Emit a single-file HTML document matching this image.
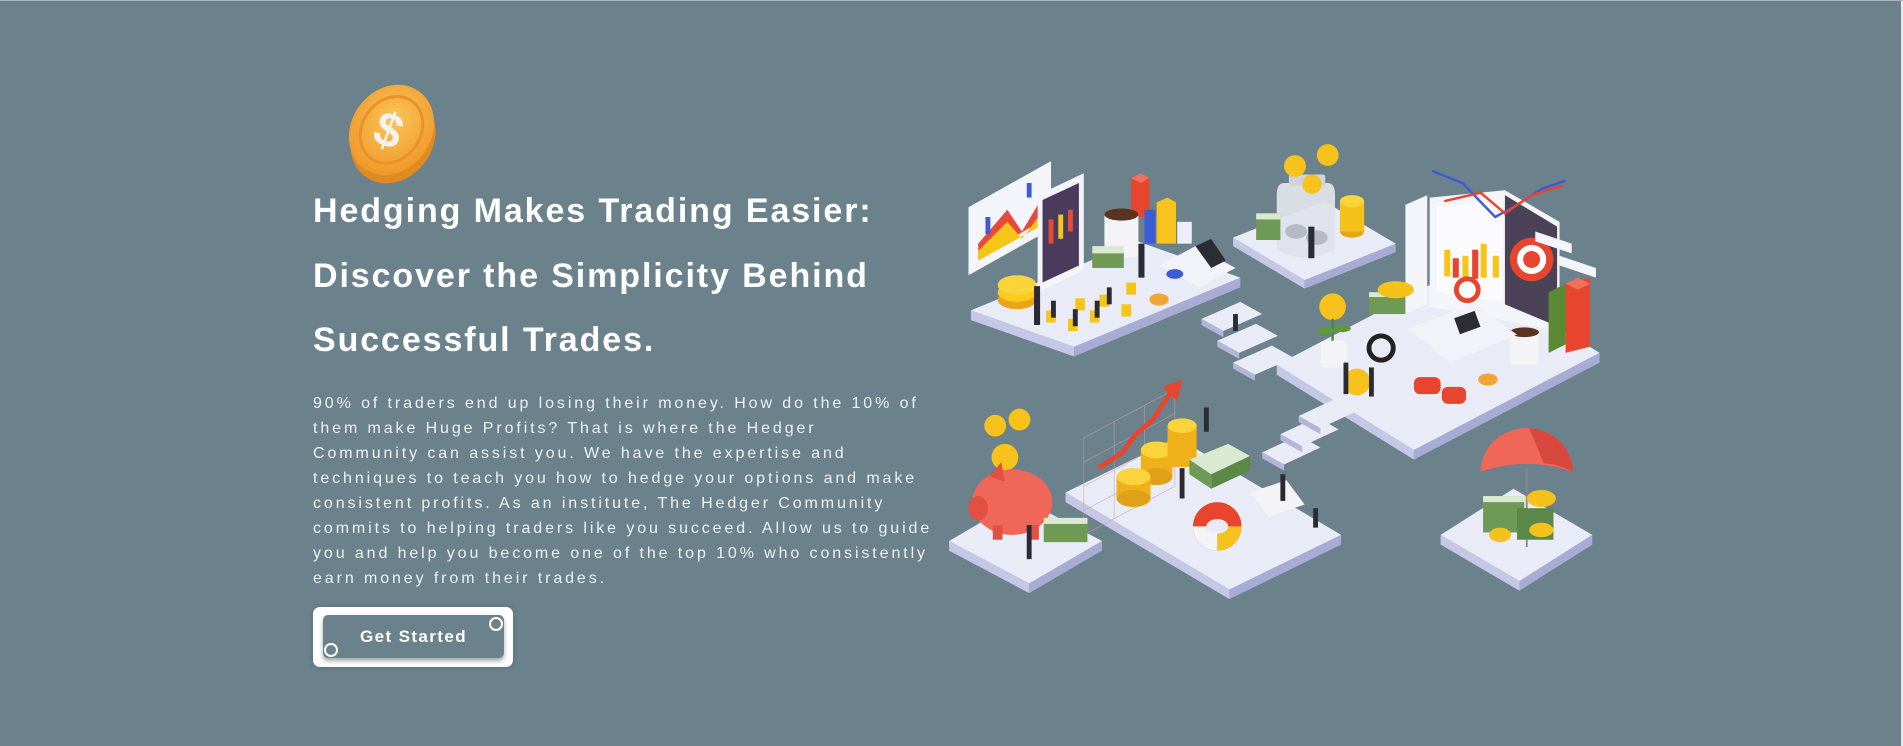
<!DOCTYPE html>
<html><head><meta charset="utf-8"><style>
html,body{margin:0;padding:0}
body{width:1903px;height:745px;background:#6b818b;position:relative;overflow:hidden;font-family:"Liberation Sans",sans-serif;border-top:1px solid #aab4bc;box-sizing:border-box}
.edge{position:absolute;right:0;top:0;width:2px;height:745px;background:#e8ecef}
h1{position:absolute;left:313px;top:178px;margin:0;color:#fff;font-size:34px;font-weight:bold;line-height:64.5px;letter-spacing:1.9px;width:700px;white-space:nowrap}
p{position:absolute;left:313px;top:390px;margin:0;color:#eef1f3;font-size:16px;line-height:25px;letter-spacing:2.9px;width:700px;white-space:nowrap}
.btn-o{position:absolute;left:313px;top:606px;width:200px;height:60px;background:#fff;border-radius:7px;box-shadow:0 0 6px rgba(0,0,0,.15)}
.btn-i{position:absolute;left:10px;top:8px;width:181px;height:43px;background:#6b818b;border-radius:5px;box-shadow:0 3px 5px rgba(0,0,0,.35);color:#fff;font-weight:bold;font-size:17px;letter-spacing:1.4px;text-align:center;line-height:43px}
.c{position:absolute;width:10px;height:10px;border:2px solid #fff;border-radius:50%;background:#6b818b}
svg.ill{position:absolute;left:0;top:0}
</style></head><body>
<div class="edge"></div>
<svg class="ill" width="1903" height="745" viewBox="0 0 1568 614" preserveAspectRatio="none">
<defs>
<radialGradient id="cg" cx="45%" cy="40%" r="60%"><stop offset="0" stop-color="#fbc45a"/><stop offset="1" stop-color="#ef9a2a"/></radialGradient>
</defs>
<g transform="rotate(35 322 107)">
<ellipse cx="327" cy="111" rx="33" ry="39" fill="#e08a22"/>
<ellipse cx="322" cy="106" rx="33" ry="39" fill="url(#cg)"/>
<ellipse cx="322" cy="106" rx="24" ry="29" fill="none" stroke="#e8922a" stroke-width="2.5"/>
</g>
<text x="320" y="120" font-family="Liberation Sans" font-weight="bold" font-size="40" fill="#f6f1ea" text-anchor="middle" transform="rotate(20 320 107)">$</text>

<g stroke="none">
<polygon points="800,255 885,285 885,293 800,263" fill="#c4c7e6"/><polygon points="885,285 1022,228 1022,236 885,293" fill="#a8abd4"/><polygon points="800,255 937,198 1022,228 885,285" fill="#e9ebf7"/>
<polygon points="1016,195 1075,230 1075,237 1016,202" fill="#c4c7e6"/><polygon points="1075,230 1150,200 1150,207 1075,237" fill="#a8abd4"/><polygon points="1016,195 1091,165 1150,200 1075,230" fill="#e9ebf7"/>
<polygon points="1052,300 1165,370 1165,378 1052,308" fill="#c4c7e6"/><polygon points="1165,370 1318,290 1318,298 1165,378" fill="#a8abd4"/><polygon points="1052,300 1205,220 1318,290 1165,370" fill="#e9ebf7"/>
<polygon points="878,405 1013,485 1013,493 878,413" fill="#c4c7e6"/><polygon points="1013,485 1105,440 1105,448 1013,493" fill="#a8abd4"/><polygon points="878,405 970,360 1105,440 1013,485" fill="#e9ebf7"/>
<polygon points="782,445 848,480 848,488 782,453" fill="#c4c7e6"/><polygon points="848,480 908,445 908,453 848,488" fill="#a8abd4"/><polygon points="782,445 842,410 908,445 848,480" fill="#e9ebf7"/>
<polygon points="1187,440 1252,478 1252,486 1187,448" fill="#c4c7e6"/><polygon points="1252,478 1312,440 1312,448 1252,486" fill="#a8abd4"/><polygon points="1187,440 1247,402 1312,440 1252,478" fill="#e9ebf7"/>
<g fill="#e9ebf7">
<polygon points="990,262 1022,248 1040,258 1008,272"/><polygon points="1003,280 1035,266 1053,276 1021,290"/><polygon points="1016,298 1048,284 1066,294 1034,308"/>
<polygon points="1040,372 1070,358 1088,368 1058,382"/><polygon points="1055,357 1085,343 1103,353 1073,367"/><polygon points="1070,342 1100,328 1118,338 1088,352"/>
</g>
<g fill="#b3b6da">
<polygon points="990,262 1008,272 1008,277 990,267"/><polygon points="1003,280 1021,290 1021,295 1003,285"/><polygon points="1016,298 1034,308 1034,313 1016,303"/>
<polygon points="1040,372 1058,382 1058,387 1040,377"/><polygon points="1055,357 1073,367 1073,372 1055,362"/><polygon points="1070,342 1088,352 1088,357 1070,347"/>
</g>
</g>

<polygon points="798,170 866,132 866,188 798,226" fill="#f4f5fb"/>
<polygon points="806,200 830,172 842,190 860,160 860,180 806,212" fill="#e84a3a"/>
<polygon points="806,206 830,182 842,196 860,172 860,184 806,214" fill="#f5c518"/>
<rect x="812" y="178" width="4" height="14" fill="#3d5bd6"/><rect x="846" y="150" width="4" height="12" fill="#3d5bd6"/>
<polygon points="855,160 893,142 893,222 855,240" fill="#f4f5fb"/>
<polygon points="859,164 889,150 889,218 859,232" fill="#4a3b5c"/>
<rect x="864" y="180" width="4" height="20" fill="#e84a3a"/><rect x="872" y="176" width="4" height="20" fill="#f5c518"/><rect x="880" y="172" width="4" height="18" fill="#e84a3a"/>
<polygon points="932,146 940,142 947,146 947,178 932,178" fill="#e8452f"/>
<polygon points="932,146 940,142 947,146 940,150" fill="#f0705e"/>
<polygon points="953,166 962,162 969,166 969,200 953,200" fill="#f7c31c"/>
<rect x="943" y="172" width="9" height="28" fill="#3d5bd6"/>
<rect x="910" y="175" width="28" height="36" rx="3" fill="#f4f4f6"/><ellipse cx="924" cy="176" rx="14" ry="5" fill="#5a3421"/>
<rect x="970" y="182" width="12" height="18" fill="#eceef8"/>
<polygon points="955,218 985,202 1018,220 988,236" fill="#f2f3f8"/><polygon points="985,202 998,196 1010,214 998,220" fill="#2c2c34"/>
<ellipse cx="838" cy="246" rx="16" ry="8" fill="#e8a51a"/><ellipse cx="838" cy="240" rx="16" ry="8" fill="#f8cb1c"/><ellipse cx="838" cy="234" rx="16" ry="8" fill="#fad43a"/>
<rect x="900" y="206" width="26" height="14" fill="#6e9a55"/><rect x="900" y="202" width="26" height="6" fill="#d9ead0"/>
<g fill="#f5c518"><rect x="862" y="255" width="8" height="10"/><rect x="880" y="262" width="8" height="10"/><rect x="898" y="255" width="8" height="10"/><rect x="886" y="245" width="8" height="10"/><rect x="906" y="242" width="8" height="10"/><rect x="924" y="250" width="8" height="10"/><rect x="928" y="232" width="8" height="10"/></g>
<g fill="#2b2b33"><rect x="852" y="235" width="5" height="32"/><rect x="866" y="247" width="4" height="14"/><rect x="884" y="254" width="4" height="14"/><rect x="902" y="247" width="4" height="14"/><rect x="912" y="236" width="4" height="14"/><rect x="938" y="200" width="5" height="28"/></g>
<ellipse cx="955" cy="246" rx="8" ry="5" fill="#f0a535"/><ellipse cx="968" cy="225" rx="7" ry="4" fill="#3d5bd6"/>

<path d="M1058,150 Q1052,150 1052,160 L1052,205 Q1075,218 1100,205 L1100,160 Q1100,150 1094,150 Z" fill="#dfe3ea" opacity="0.95"/>
<rect x="1062" y="143" width="30" height="9" rx="2" fill="#cfd4dc"/>
<ellipse cx="1068" cy="190" rx="9" ry="6" fill="#b5bac3"/><ellipse cx="1085" cy="195" rx="9" ry="6" fill="#b5bac3"/>
<circle cx="1067" cy="136" r="9" fill="#f7c21c"/><circle cx="1094" cy="127" r="9" fill="#f7c21c"/><circle cx="1081" cy="151" r="8" fill="#f7c21c"/>
<ellipse cx="1114" cy="190" rx="10" ry="5" fill="#e8a51a"/><rect x="1104" y="165" width="20" height="25" fill="#f5c21c"/><ellipse cx="1114" cy="165" rx="10" ry="5" fill="#fad43a"/>
<rect x="1035" y="175" width="20" height="22" fill="#6e9a55"/><rect x="1035" y="175" width="20" height="5" fill="#d9ead0"/>
<rect x="1078" y="186" width="5" height="26" fill="#2b2b33"/>

<polygon points="1158,168 1176,160 1176,250 1158,258" fill="#f4f5fb"/>
<polygon points="1178,162 1240,156 1285,182 1285,272 1178,252" fill="#f4f5fb"/>
<polygon points="1184,170 1238,164 1238,248 1184,240" fill="#fbfbfd"/>
<polygon points="1240,160 1283,186 1283,268 1240,250" fill="#4b4257"/>
<g fill="#f5c518"><rect x="1190" y="205" width="5" height="22"/><rect x="1205" y="210" width="5" height="20"/><rect x="1220" y="200" width="5" height="28"/><rect x="1230" y="210" width="5" height="18"/></g>
<g fill="#e8452f"><rect x="1197" y="212" width="5" height="16"/><rect x="1213" y="205" width="5" height="24"/></g>
<circle cx="1209" cy="238" r="9" fill="none" stroke="#e8452f" stroke-width="4"/>
<circle cx="1262" cy="213" r="18" fill="#e8452f"/><circle cx="1262" cy="213" r="12" fill="#fff"/><circle cx="1262" cy="213" r="7" fill="#e8452f"/>
<polyline points="1180,140 1205,150 1232,178 1250,168 1270,155 1290,148" fill="none" stroke="#3d5bd6" stroke-width="2"/>
<polyline points="1190,165 1220,158 1240,175 1262,160 1288,152" fill="none" stroke="#e8452f" stroke-width="2"/>
<polygon points="1265,190 1295,200 1295,208 1265,198" fill="#f4f5fb"/><polygon points="1285,210 1315,220 1315,228 1285,218" fill="#f4f5fb"/>
<polygon points="1276,240 1290,233 1290,283 1276,290" fill="#5a8a33"/>
<polygon points="1290,233 1310,228 1310,285 1290,290" fill="#e8452f"/><polygon points="1290,233 1300,228 1310,233 1300,238" fill="#f0705e"/>
<rect x="1244" y="272" width="24" height="28" rx="3" fill="#f4f4f6"/><ellipse cx="1256" cy="273" rx="12" ry="4" fill="#5a3421"/>
<polygon points="1160,270 1215,250 1250,275 1195,298" fill="#f2f3f8"/>
<rect x="1200" y="258" width="18" height="14" fill="#2c2c34" transform="rotate(-20 1209 265)"/>
<circle cx="1098" cy="252" r="11" fill="#f7c21c"/><path d="M1098,262 L1098,280" stroke="#4f8a30" stroke-width="2"/>
<ellipse cx="1092" cy="272" rx="7" ry="3" fill="#5f9a3a"/><ellipse cx="1106" cy="270" rx="7" ry="3" fill="#5f9a3a"/>
<rect x="1088" y="280" width="22" height="22" rx="3" fill="#f4f4f6"/>
<circle cx="1138" cy="286" r="10" fill="none" stroke="#222" stroke-width="4"/>
<rect x="1128" y="240" width="30" height="18" fill="#6e9a55"/><rect x="1128" y="240" width="30" height="4" fill="#d9ead0"/>
<ellipse cx="1150" cy="238" rx="15" ry="7" fill="#f5c21c"/>
<ellipse cx="1118" cy="314" rx="11" ry="11" fill="#f7c21c"/>
<rect x="1165" y="310" width="22" height="14" rx="5" fill="#e8452f"/><rect x="1188" y="318" width="20" height="14" rx="5" fill="#e8452f"/>
<g fill="#2b2b33"><rect x="1107" y="298" width="4" height="26"/><rect x="1128" y="302" width="4" height="24"/><rect x="1016" y="258" width="4" height="14"/></g>
<ellipse cx="1226" cy="312" rx="8" ry="5" fill="#f0a535"/>

<g stroke="#c7a1a8" stroke-width="0.6" fill="none" opacity="0.7">
<polygon points="893,360 968,320 968,400 893,440"/>
<line x1="918" y1="347" x2="918" y2="427"/><line x1="943" y1="333" x2="943" y2="413"/>
<line x1="893" y1="380" x2="968" y2="340"/><line x1="893" y1="400" x2="968" y2="360"/><line x1="893" y1="420" x2="968" y2="380"/>
</g>
<polyline points="905,385 925,372 935,358 950,345 965,322" fill="none" stroke="#e8452f" stroke-width="4"/>
<polygon points="958,318 974,312 970,330" fill="#e8452f"/>
<g>
<rect x="940" y="370" width="26" height="22" fill="#f0b01a"/><ellipse cx="953" cy="392" rx="13" ry="7" fill="#e0a018"/><ellipse cx="953" cy="370" rx="13" ry="7" fill="#fad43a"/>
<rect x="962" y="350" width="24" height="34" fill="#f0b01a"/><ellipse cx="974" cy="350" rx="12" ry="6" fill="#fad43a"/>
<rect x="920" y="392" width="28" height="18" fill="#f0b01a"/><ellipse cx="934" cy="410" rx="14" ry="7" fill="#e0a018"/><ellipse cx="934" cy="392" rx="14" ry="7" fill="#fad43a"/>
</g>
<polygon points="980,378 1012,365 1030,375 998,390" fill="#d9ead0"/><polygon points="980,378 998,390 998,402 980,390" fill="#6e9a55"/><polygon points="998,390 1030,375 1030,387 998,402" fill="#5b8846"/>
<circle cx="1003" cy="433" r="20" fill="#e8452f"/><path d="M1003,433 L1003,453 A20,20 0 0 0 1023,433 Z" fill="#f7c21c"/><path d="M1003,433 L983,433 A20,20 0 0 0 1003,453 Z" fill="#f4f4f6"/><ellipse cx="1003" cy="433" rx="9" ry="6" fill="#e9ebf7"/>
<polygon points="1030,405 1060,395 1075,415 1045,425" fill="#f4f4f6"/>
<g fill="#2b2b33"><rect x="972" y="385" width="4" height="25"/><rect x="1055" y="390" width="4" height="22"/><rect x="992" y="335" width="4" height="20"/><rect x="1082" y="418" width="4" height="16"/></g>

<circle cx="820" cy="350" r="9" fill="#f7c21c"/><circle cx="840" cy="345" r="9" fill="#f7c21c"/><circle cx="828" cy="376" r="11" fill="#f7c21c"/>
<ellipse cx="834" cy="413" rx="33" ry="27" fill="#f06658"/>
<ellipse cx="806" cy="418" rx="8" ry="10" fill="#e24f43"/>
<polygon points="815,392 825,380 828,396" fill="#e24f43"/>
<rect x="818" y="432" width="8" height="12" fill="#e24f43"/><rect x="848" y="432" width="8" height="12" fill="#e24f43"/>
<rect x="860" y="426" width="36" height="20" fill="#6e9a55"/><rect x="860" y="426" width="36" height="5" fill="#d9ead0"/>
<rect x="846" y="432" width="4" height="28" fill="#2b2b33"/>

<path d="M1220,388 A38,36 0 0 1 1296,388 Q1258,375 1220,388 Z" fill="#f06658"/>
<path d="M1260,352 A38,36 0 0 1 1296,388 Q1285,382 1272,381 Z" fill="#d9483c"/>
<line x1="1258" y1="385" x2="1258" y2="450" stroke="#888" stroke-width="1.5"/>
<rect x="1222" y="408" width="34" height="30" fill="#6e9a55"/><rect x="1222" y="408" width="34" height="5" fill="#d9ead0"/>
<rect x="1250" y="418" width="30" height="26" fill="#5b8846"/>
<ellipse cx="1270" cy="410" rx="12" ry="7" fill="#f5c21c"/><ellipse cx="1236" cy="440" rx="9" ry="6" fill="#f5c21c"/><ellipse cx="1270" cy="436" rx="10" ry="6" fill="#f5c21c"/>
</svg>

<h1>Hedging Makes Trading Easier:<br>Discover the Simplicity Behind<br>Successful Trades.</h1>
<p>90% of traders end up losing their money. How do the 10% of<br>them make Huge Profits? That is where the Hedger<br>Community can assist you. We have the expertise and<br>techniques to teach you how to hedge your options and make<br>consistent profits. As an institute, The Hedger Community<br>commits to helping traders like you succeed. Allow us to guide<br>you and help you become one of the top 10% who consistently<br>earn money from their trades.</p>
<div class="btn-o"><div class="btn-i">Get Started</div>
<div class="c" style="left:176px;top:10px"></div>
<div class="c" style="left:11px;top:36px"></div>
</div>
</body></html>
